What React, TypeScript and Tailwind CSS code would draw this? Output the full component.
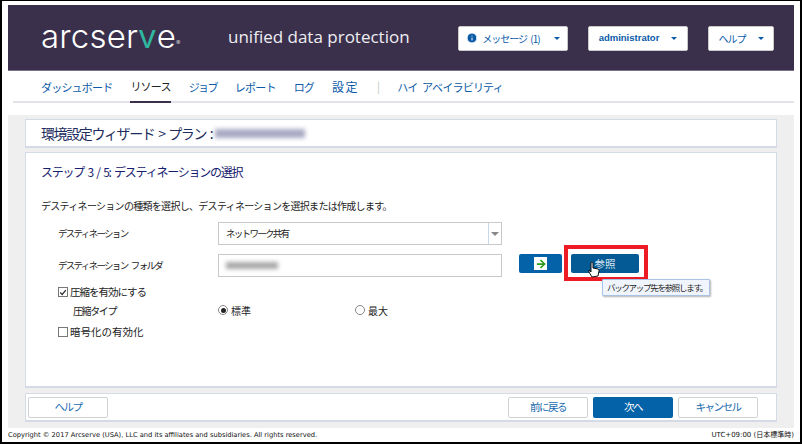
import React from 'react';
import { ArrowRight, Info } from 'lucide-react';

const jp = "font-['Noto_Sans_CJK_JP','Noto_Sans',sans-serif]";

const navItems = [
  { label: 'ダッシュボード', cls: 'text-[#0a5aa8]' },
  { label: 'リソース', cls: 'text-[#222] border-b-2 border-[#3b304c]' },
  { label: 'ジョブ', cls: 'text-[#0a5aa8] tracking-[-1.6px]' },
  { label: 'レポート', cls: 'text-[#0a5aa8]' },
  { label: 'ログ', cls: 'text-[#0a5aa8]' },
  { label: '設定', cls: 'text-[#0a5aa8] text-[12px] tracking-[1.5px]' },
];

const HeaderButton = ({ width, gap, children }: { width: string; gap?: string; children: React.ReactNode }) => (
  <button className={`${width} h-[25px] flex items-center justify-center bg-white border border-[#c9c9c9] rounded-[2px] text-[10px] text-[#0a5aa8] ${gap ?? 'gap-3'}`}>
    {children}
    <span className="w-0 h-0 border-x-[3px] border-x-transparent border-t-[3px] border-t-[#0a5aa8]" />
  </button>
);

const FooterButton = ({ label, primary }: { label: string; primary?: boolean }) => (
  <button className={`w-[80px] h-[21px] flex items-center justify-center rounded-[2px] text-[10.5px] tracking-[-1.5px] ${primary ? 'bg-[#0462a8] text-white' : 'bg-white border border-[#cfd3d8] text-[#1a6cb0]'}`}>
    {label}
  </button>
);

const FieldRow = ({ label, children }: { label: string; children: React.ReactNode }) => (
  <div className="flex items-center h-[23px]">
    <div className="w-[177px] pl-[17px] text-[9.5px] tracking-[-1.7px] [word-spacing:3px] text-[#222]">{label}</div>
    {children}
  </div>
);

const Radio = ({ checked, label, width }: { checked?: boolean; label: string; width: string }) => (
  <label className={`${width} flex items-center gap-[3px]`}>
    <span className="w-[10px] h-[10px] rounded-full border border-[#888] flex items-center justify-center bg-white">
      {checked && <span className="w-[5px] h-[5px] rounded-full bg-[#222]" />}
    </span>
    <span className="text-[10px] text-[#222]">{label}</span>
  </label>
);

const Checkbox = ({ checked, label, tracking }: { checked?: boolean; label: string; tracking?: string }) => (
  <label className="flex items-center gap-[2px] pl-[17px] h-[14px]">
    <span className="w-[10px] h-[10px] border border-[#777] bg-white flex items-center justify-center">
      {checked && (
        <svg viewBox="0 0 10 10" className="w-[9px] h-[9px]">
          <path d="M1.5 5 L4 7.5 L8.5 2" fill="none" stroke="#333" strokeWidth="1.6" />
        </svg>
      )}
    </span>
    <span className={`text-[10.5px] text-[#222] ${tracking ?? ''}`}>{label}</span>
  </label>
);

const HandCursor = () => (
  <svg viewBox="0 0 12 16" className="absolute left-[17px] top-[8px] w-[12px] h-[16px]">
    <path
      d="M3 1 C3 0 5 0 5 1 L5 6 L10 7 C11 7.5 11 8 11 9 L10 14 L4 15 L1 10 L1 8 L3 10 Z"
      fill="#fff"
      stroke="#111"
      strokeWidth="1"
    />
  </svg>
);

export default function App() {
  return (
    <div className={`${jp} w-[802px] h-[444px] flex flex-col bg-white border-t border-x-2 border-b-2 border-black pt-[4px] pl-[6px] pr-[6px] overflow-hidden`}>
      {/* Header */}
      <div className="h-[66px] shrink-0 flex items-center bg-[#3b304c] border-b border-[#77718a]">
        <div className="w-[220px] pl-[33px] pb-[3px] font-['Inter',sans-serif] font-light text-[33px] leading-none tracking-[0.2px] text-white whitespace-nowrap">
          arcser<span className="font-normal text-[#2fb7a0]">v</span>e
          <sup className="text-[6px]">®</sup>
        </div>
        <div className="w-[230px] pb-[1px] font-['Open_Sans',sans-serif] text-[17px] text-[#eeeef2] whitespace-nowrap">
          unified data protection
        </div>
        <div className="flex items-center pt-[1px]">
          <HeaderButton width="w-[110px]" gap="gap-[14px]">
            <span className="flex items-center gap-[4px] tracking-[-1px] [word-spacing:2px]">
              <Info size={12} fill="#0a5aa8" stroke="#fff" />
              メッセージ (1)
            </span>
          </HeaderButton>
          <div className="w-[20px]" />
          <HeaderButton width="w-[100px]">
            <span className="font-['Liberation_Sans',sans-serif] font-bold text-[9.5px]">administrator</span>
          </HeaderButton>
          <div className="w-[20px]" />
          <HeaderButton width="w-[66px]">
            <span className="tracking-[-1px]">ヘルプ</span>
          </HeaderButton>
        </div>
      </div>

      {/* Nav */}
      <div className="h-[32px] shrink-0 ml-[5px] flex items-stretch gap-[18px] pl-[28px] border-b-2 border-[#e2e4ea] text-[11px] tracking-[-0.8px]">
        {navItems.map((item) => (
          <div key={item.label} className={`flex items-center h-[32px] ${item.cls}`}>
            {item.label}
          </div>
        ))}
        <div className="flex items-center text-[#c4c4c4]">|</div>
        <div className="flex items-center h-[32px] text-[#0a5aa8] [word-spacing:3px]">ハイ アベイラビリティ</div>
      </div>

      <div className="h-[12px] shrink-0" />

      {/* Content */}
      <div className="h-[313px] shrink-0 bg-[#efefef] px-[17px] pt-[4px] pb-[5px] flex flex-col">
        <div className="h-[29px] shrink-0 mb-[4px] bg-white border border-[#d4dbe6] border-b-2 pl-[15px] flex items-center text-[14px] tracking-[-1.4px] [word-spacing:2px] text-[#1c2c5c]">
          環境設定ウィザード &gt; プラン :
          <span className="ml-[3px] w-[90px] h-[9px] bg-[#a9a9c4] blur-[2px]" />
        </div>

        <div className="h-[236px] shrink-0 mb-[5px] bg-white border border-[#d4dbe6] border-b-2 pl-[15px] pt-[10px]">
          <div className="text-[12px] tracking-[-1.25px] [word-spacing:2px] leading-[18px] text-[#16206e]">ステップ 3 / 5: デスティネーションの選択</div>
          <div className="mt-[18px] text-[10px] tracking-[-0.7px] leading-[14px] text-[#222]">
            デスティネーションの種類を選択し、デスティネーションを選択または作成します。
          </div>

          <div className="mt-[9px] flex flex-col gap-[9px]">
            <FieldRow label="デスティネーション">
              <div className="w-[284px] h-[23px] border border-[#c9c9c9] flex items-center">
                <span className="flex-1 pl-[7px] text-[9.5px] tracking-[-1.7px] text-[#222]">ネットワーク共有</span>
                <span className="w-[13px] h-full border-l border-[#c9d6e8] flex items-center justify-center">
                  <span className="w-0 h-0 border-x-[4px] border-x-transparent border-t-[4px] border-t-[#888]" />
                </span>
              </div>
            </FieldRow>
            <FieldRow label="デスティネーション フォルダ">
              <div className="w-[284px] h-[23px] border border-[#c9c9c9] flex items-center pl-[7px]">
                <span className="w-[52px] h-[7px] bg-[#a8a8a8] blur-[2px]" />
              </div>
              <div className="flex items-start h-[23px] ml-[17px] gap-[9px]">
                <button className="w-[43px] h-[19px] bg-[#0462a8] rounded-[2px] flex items-center justify-center">
                  <span className="w-[13px] h-[13px] bg-white flex items-center justify-center">
                    <ArrowRight size={12} strokeWidth={3.5} className="text-[#2f9a1c]" />
                  </span>
                </button>
                <button className="relative w-[68px] h-[19px] bg-[#045a94] rounded-[2px] text-[10.5px] text-[#dce8f2]">
                  参照
                  <span className="absolute -left-[7px] -top-[9px] w-[84px] h-[36px] border-[4px] border-[#ed1c24]" />
                  <HandCursor />
                  <span className="absolute left-[31px] top-[25px] w-[108px] h-[17px] pl-[4px] flex items-center bg-[#f0f5fd] border border-[#a9c3e6] rounded-[1px] shadow-[1px_1px_2px_rgba(0,0,0,0.3)] text-[8.5px] tracking-[-1.3px] text-[#222] whitespace-nowrap">
                    バックアップ先を参照します。
                  </span>
                </button>
              </div>
            </FieldRow>
          </div>

          <div className="mt-[8px]">
            <Checkbox checked label="圧縮を有効にする" tracking="tracking-[-1px]" />
            <div className="mt-[4px] flex items-center h-[14px]">
              <div className="w-[177px] pl-[32px] text-[10px] tracking-[-1.4px] text-[#222]">圧縮タイプ</div>
              <Radio checked label="標準" width="w-[137px]" />
              <Radio label="最大" width="w-[60px]" />
            </div>
            <div className="mt-[8px]">
              <Checkbox label="暗号化の有効化" />
            </div>
          </div>
        </div>

        <div className="h-[29px] shrink-0 bg-white border border-[#d4dbe6] border-b-2 pl-[2px] pr-[18px] flex items-center justify-between">
          <FooterButton label="ヘルプ" />
          <div className="flex gap-[5px]">
            <FooterButton label="前に戻る" />
            <FooterButton label="次へ" primary />
            <FooterButton label="キャンセル" />
          </div>
        </div>
      </div>

      {/* Footer */}
      <div className="flex-1 pt-[1px] flex items-center justify-between text-[#111] whitespace-nowrap">
        <span className="font-['DejaVu_Sans',sans-serif] text-[6.7px]">
          Copyright © 2017 Arcserve (USA), LLC and its affiliates and subsidiaries. All rights reserved.
        </span>
        <span className="font-['DejaVu_Sans','Noto_Sans_CJK_JP',sans-serif] text-[7px]">UTC+09:00 (日本標準時)</span>
      </div>
    </div>
  );
}
